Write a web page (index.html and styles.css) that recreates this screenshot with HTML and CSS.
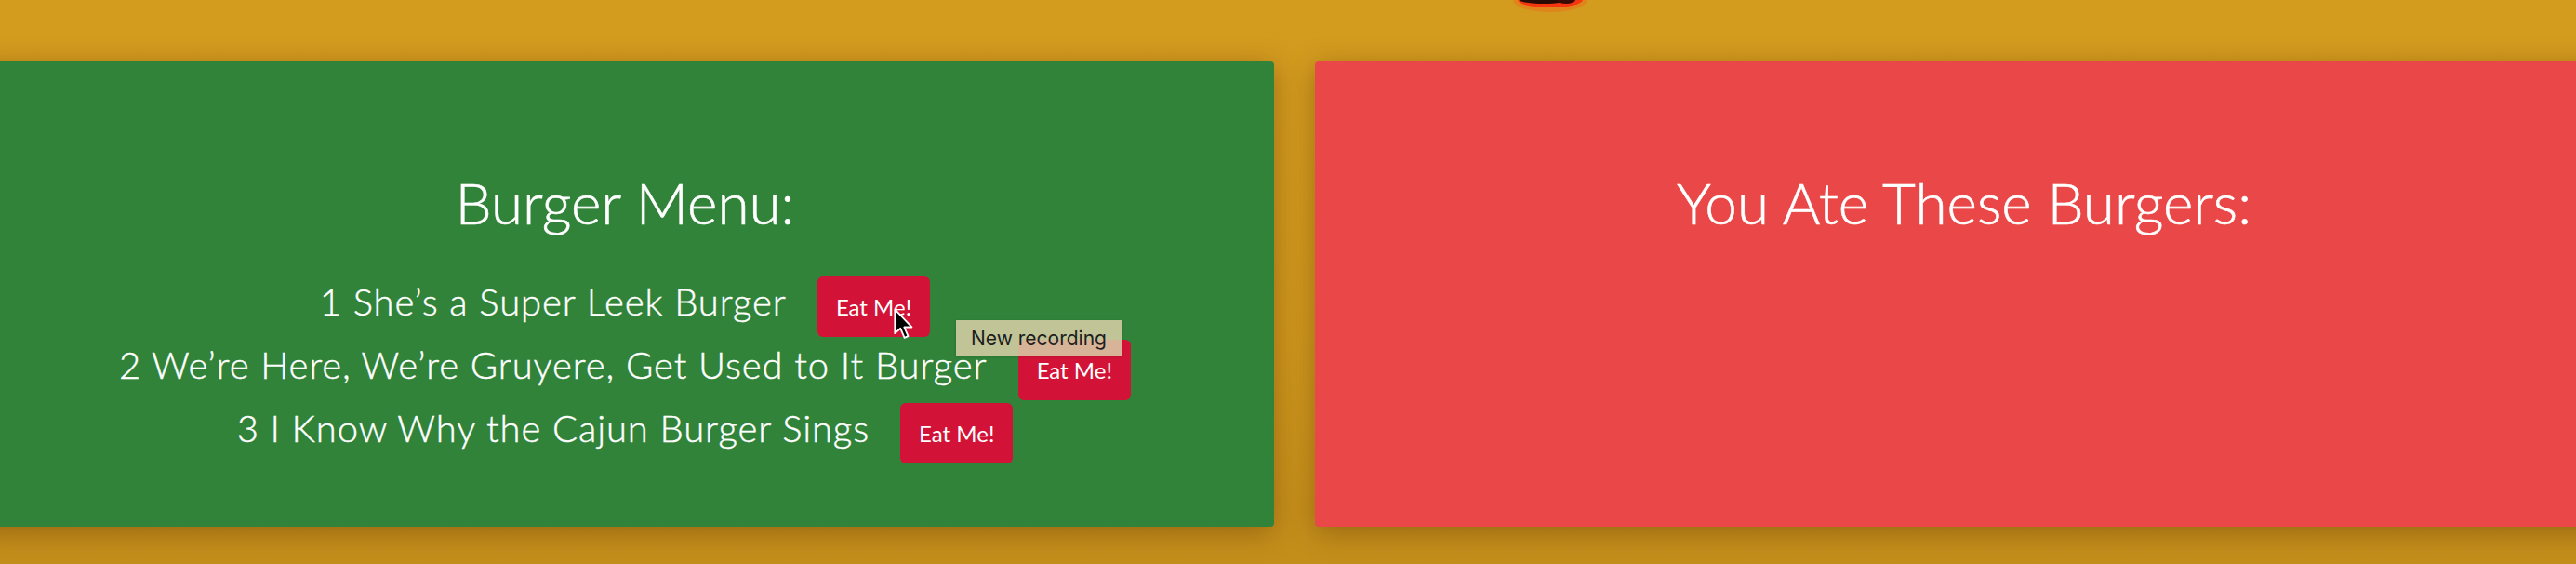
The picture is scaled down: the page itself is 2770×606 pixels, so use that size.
FILE: index.html
```html
<!DOCTYPE html>
<html lang="en">
<head>
<meta charset="utf-8">
<title>Eat-Da-Burger</title>
<link rel="stylesheet" href="styles.css">
</head>
<body>
  <svg class="logo" viewBox="0 0 90 18" width="90" height="18" aria-hidden="true">
    <ellipse cx="45" cy="0" rx="40" ry="13" fill="#e8731a" opacity="0.55"/>
    <ellipse cx="45" cy="0" rx="35" ry="8" fill="#f5360f"/>
    <ellipse cx="38" cy="0" rx="26" ry="4" fill="#2a0a05"/>
    <ellipse cx="62" cy="0" rx="10" ry="4" fill="#3a0b05"/>
  </svg>

  <main class="board">
    <section class="panel panel-menu">
      <h1 class="panel-title">Burger Menu:</h1>
      <ul class="burger-list">
        <li class="burger-row"><span class="burger-name">1 She’s a Super Leek Burger</span><button class="eat-btn">Eat Me!</button></li>
        <li class="burger-row"><span class="burger-name">2 We’re Here, We’re Gruyere, Get Used to It Burger</span><button class="eat-btn">Eat Me!</button></li>
        <li class="burger-row"><span class="burger-name">3 I Know Why the Cajun Burger Sings</span><button class="eat-btn">Eat Me!</button></li>
      </ul>
    </section>
    <section class="panel panel-eaten">
      <h1 class="panel-title">You Ate These Burgers:</h1>
    </section>
  </main>

  <div class="tooltip">New recording</div>
  <svg class="cursor" viewBox="0 0 17 27" width="22" height="35" aria-hidden="true">
    <path d="M1 1 L1 21 L5.6 16.8 L9 24.6 L12 23.3 L8.7 15.8 L15 15.8 Z" fill="#000" stroke="#fff" stroke-width="1.4" stroke-linejoin="round"/>
  </svg>
</body>
</html>
```

FILE: styles.css
```css
html, body {
  margin: 0;
  padding: 0;
}

body {
  width: 2770px;
  height: 606px;
  overflow: hidden;
  position: relative;
  background: linear-gradient(#d49c1f, #cf971d 60%, #c48e1b);
  font-family: "Lato", "Open Sans", sans-serif;
  color: #fff;
}

.logo {
  position: absolute;
  left: 1622px;
  top: 0;
}

.board {
  display: flex;
  gap: 44px;
  margin-left: -26px;
  padding-top: 66px;
  width: 2836px;
}

.panel {
  flex: none;
  width: 1396px;
  height: 500px;
  border-radius: 4px;
  box-shadow: 0 6px 30px rgba(70, 35, 0, 0.38);
  display: flex;
  flex-direction: column;
  align-items: center;
  padding-top: 114px;
  box-sizing: border-box;
}

.panel-menu {
  background: #31833a;
}

.panel-eaten {
  background: #ea4848;
}

.panel-title {
  margin: 0;
  font-size: 62px;
  font-weight: 300;
  line-height: 1.2;
  -webkit-text-stroke: 0.6px #fff;
}

.burger-list {
  list-style: none;
  margin: 43px 0 0;
  padding: 0;
  display: flex;
  flex-direction: column;
  gap: 3px;
}

.burger-row {
  display: flex;
  justify-content: center;
  align-items: baseline;
  gap: 33px;
}

.burger-name {
  font-size: 40px;
  font-weight: 300;
  line-height: 1.2;
  letter-spacing: 0.9px;
  -webkit-text-stroke: 0.4px #fff;
}

.eat-btn {
  font-family: "Lato", "Open Sans", sans-serif;
  font-size: 24px;
  font-weight: 400;
  color: #fff;
  background: #d31238;
  border: none;
  border-radius: 6px;
  height: 65px;
  line-height: 65px;
  padding: 0 20px;
}

.tooltip {
  position: absolute;
  left: 1028px;
  top: 344px;
  width: 178px;
  height: 38px;
  box-sizing: border-box;
  display: flex;
  align-items: center;
  justify-content: center;
  background: rgba(215, 207, 167, 0.86);
  color: #1e1e1e;
  font-family: "Inter", "Liberation Sans", sans-serif;
  font-size: 21px;
  box-shadow: 0 1px 3px rgba(0, 0, 0, 0.2);
}

.cursor {
  position: absolute;
  left: 961px;
  top: 331px;
}
```
